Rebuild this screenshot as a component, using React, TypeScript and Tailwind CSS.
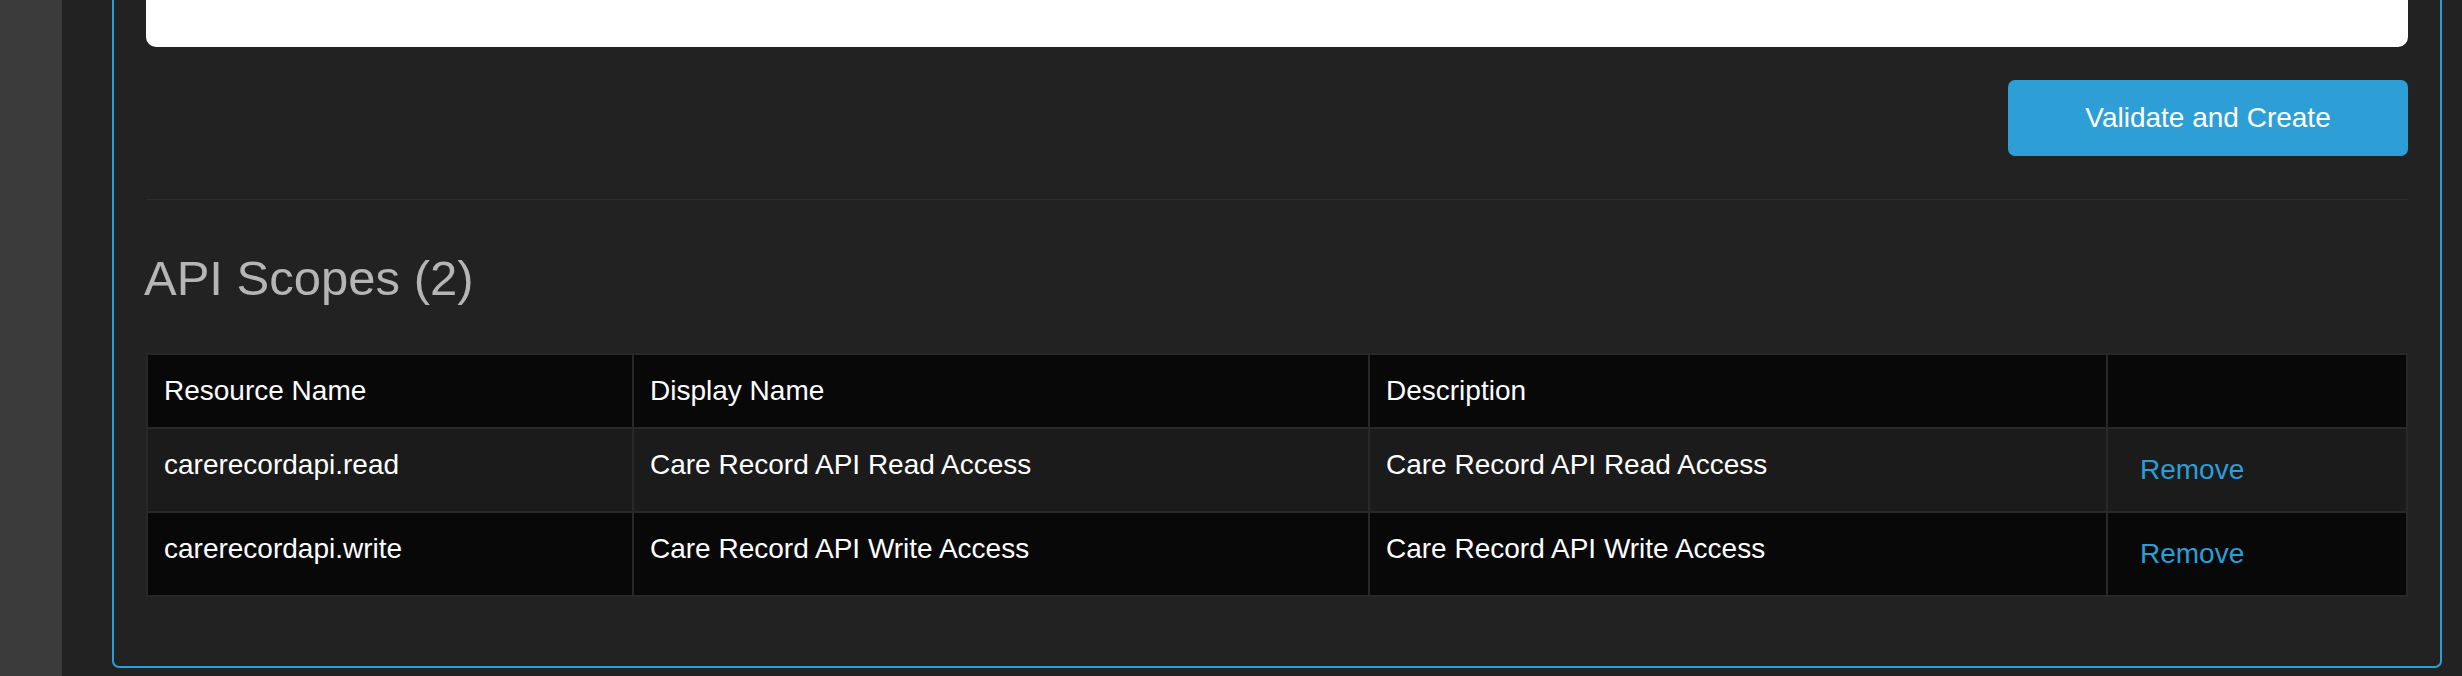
const scopes = [
  {
    name: "carerecordapi.read",
    displayName: "Care Record API Read Access",
    description: "Care Record API Read Access",
  },
  {
    name: "carerecordapi.write",
    displayName: "Care Record API Write Access",
    description: "Care Record API Write Access",
  },
]

const columns = ["Resource Name", "Display Name", "Description", ""]

const App = () => {
  return (
    <div className="flex h-[676px] w-full overflow-hidden bg-[#222222] font-['Liberation_Sans',Arial,sans-serif] text-white">
      {/* sidebar edge */}
      <div className="w-[62px] flex-shrink-0 bg-[#3b3b3b]" />

      <div className="flex-1 pl-[50px] pr-[20px]">
        <div className="rounded-b-[7px] border-x-2 border-b-2 border-[#2a9fd6] px-[32px] pb-[69px]">
          {/* bottom of the editor box */}
          <div className="h-[47px] rounded-b-[10px] bg-white" />

          <div className="mt-[33px] flex justify-end">
            <button className="h-[76px] w-[400px] rounded-[7px] bg-[#2d9fd6] text-[28px] text-white">
              Validate and Create
            </button>
          </div>

          <div className="mt-[43px] h-px bg-[#2c2c2c]" />

          <h2 className="mt-[54px] -ml-[2px] h-[50px] text-[49px] leading-none font-normal text-[#b5b5b5]">
            API Scopes ({scopes.length})
          </h2>

          <div className="mt-[49px] grid grid-cols-[484px_734px_736px_1fr] gap-[2px] bg-[#282828] p-[2px] text-[28px] leading-[40px]">
            {columns.map((col, i) => (
              <div key={i} className="h-[72px] bg-[#080808] px-4 py-4">
                {col}
              </div>
            ))}
            {scopes.map((scope, idx) => {
              const rowBg = idx % 2 === 0 ? "bg-[#1b1b1b]" : "bg-[#080808]"
              return [
                <div key={`${scope.name}-n`} className={`h-[82px] px-4 py-4 ${rowBg}`}>
                  {scope.name}
                </div>,
                <div key={`${scope.name}-d`} className={`h-[82px] px-4 py-4 ${rowBg}`}>
                  {scope.displayName}
                </div>,
                <div key={`${scope.name}-s`} className={`h-[82px] px-4 py-4 ${rowBg}`}>
                  {scope.description}
                </div>,
                <div key={`${scope.name}-r`} className={`h-[82px] px-4 py-4 ${rowBg}`}>
                  <button className="px-4 py-[5px] text-[#2a9fd6]">Remove</button>
                </div>,
              ]
            })}
          </div>
        </div>
      </div>
    </div>
  )
}

export default App
